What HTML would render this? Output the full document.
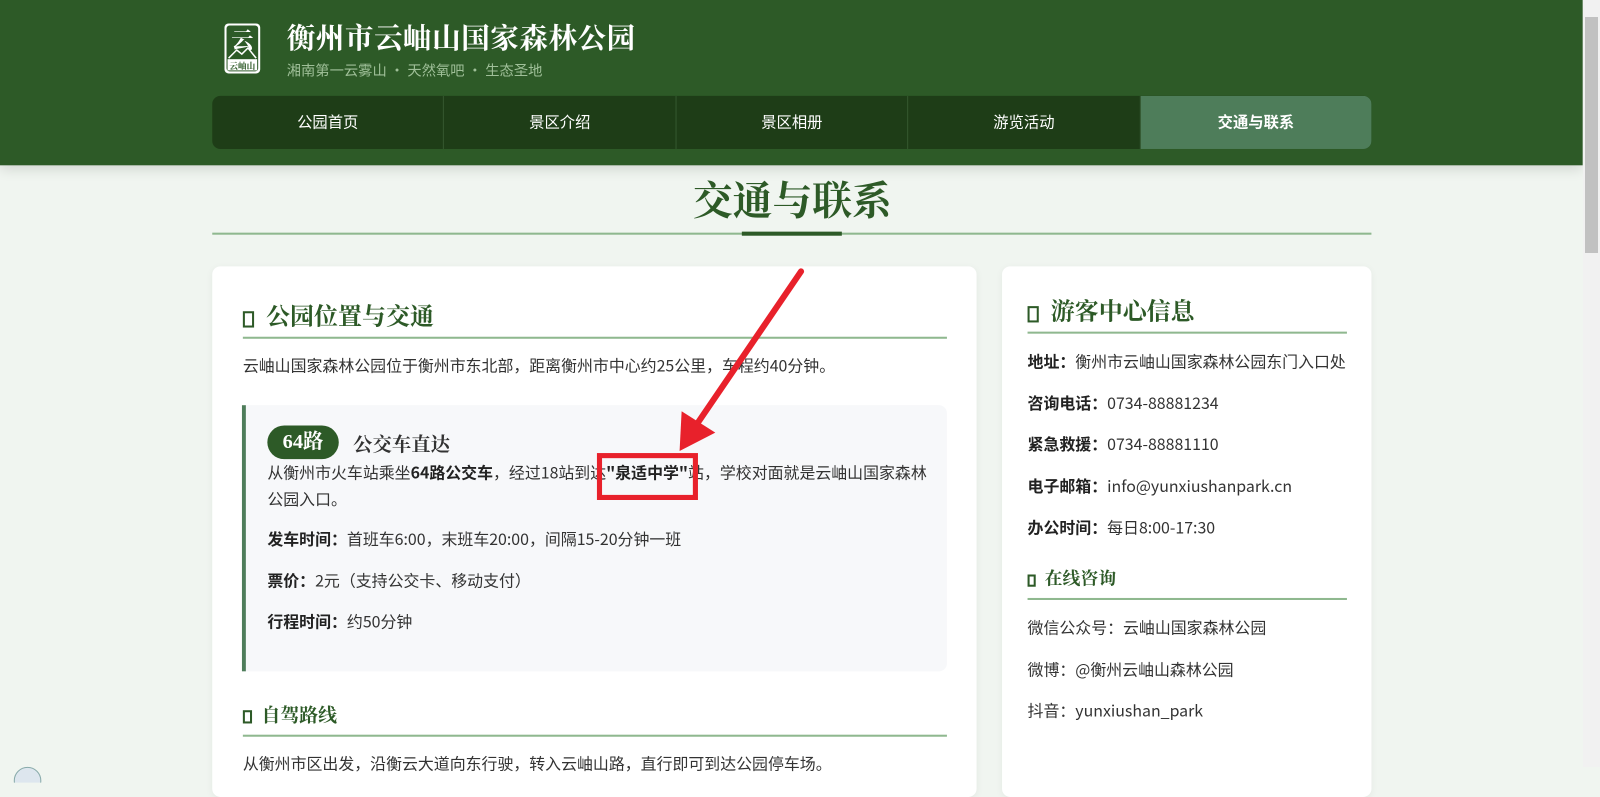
<!DOCTYPE html>
<html><head><meta charset="utf-8"><style>
*{margin:0;padding:0;box-sizing:border-box}
body{width:1600px;height:767px;overflow:hidden;background:#f0f5f0;font-family:"Noto Sans CJK SC","Liberation Sans",sans-serif;color:#333;position:relative}
#w{position:absolute;left:0;top:0;width:1551px;height:752px;transform:scale(1.02041);transform-origin:0 0}
.a{position:absolute;white-space:nowrap}
.serif{font-family:"Liberation Serif","Noto Serif CJK SC",serif;font-weight:bold}
header{position:absolute;left:0;top:0;width:1551px;height:162px;background:#2d5a27;box-shadow:0 4px 12px rgba(0,0,0,.12)}
.nav{position:absolute;left:208px;top:94px;width:1136px;height:52px;background:#1e3d17;border-radius:8px;display:flex;overflow:hidden}
.nav div{flex:1;color:#fff;font-size:15px;text-align:center;line-height:52px;border-right:1px solid #35582f}
.nav div:last-child{background:#4e7d5a;font-weight:bold;border:none}
.card{position:absolute;background:#fff;border-radius:8px;box-shadow:0 2px 8px rgba(0,0,0,.05)}
.h{color:#2d5a27}
.ic{display:inline-block;width:11px;height:16px;border:2px solid #2d5a27;vertical-align:middle}
.line{position:absolute;height:2px;background:#8fb88f}
.t{font-size:15.6px;color:#333}
b{color:#222}
</style></head><body>
<div id="w">
<header>
  <svg class="a" style="left:219px;top:22px" width="37" height="51" viewBox="0 0 37 51">
    <rect x="1" y="1" width="35" height="49" rx="4" fill="#fff"/>
    <rect x="3" y="3" width="31" height="45" rx="3" fill="#2d5a27"/>
    <text x="18.5" y="25" font-size="22" fill="#fff" text-anchor="middle" font-family="Noto Serif CJK SC,serif" font-weight="bold">云</text>
    <path d="M5 35 L13 27 L18 31 L24 25 L32 35" stroke="#fff" fill="none" stroke-width="1.5"/>
    <rect x="4" y="36" width="29" height="11" fill="#fff"/>
    <text x="18.5" y="45.5" font-size="8.5" fill="#2d5a27" text-anchor="middle" font-family="Noto Serif CJK SC,serif" font-weight="bold">云岫山</text>
  </svg>
  <div class="a serif" style="left:281px;top:16px;font-size:28px;color:#fff;letter-spacing:0.5px">衡州市云岫山国家森林公园</div>
  <div class="a" style="left:281px;top:59px;font-size:14px;color:#9fbf98">湘南第一云雾山 · 天然氧吧 · 生态圣地</div>
  <div class="nav"><div>公园首页</div><div>景区介绍</div><div>景区相册</div><div>游览活动</div><div>交通与联系</div></div>
</header>
<div class="a serif h" style="left:679px;top:166px;font-size:39px">交通与联系</div>
<div class="line" style="left:208px;top:228px;width:1136px"></div>
<div class="a" style="left:727px;top:227px;width:98px;height:4px;background:#2d5a27"></div>

<div class="card" style="left:208px;top:261px;width:749px;height:520px">
  <div class="a serif h" style="left:30px;top:30px;font-size:23.5px"><span class="ic"></span>&nbsp; 公园位置与交通</div>
  <div class="line" style="left:30px;top:69px;width:690px"></div>
  <div class="a t" style="left:30px;top:86px">云岫山国家森林公园位于衡州市东北部，距离衡州市中心约25公里，车程约40分钟。</div>
  <div class="a" style="left:29px;top:136px;width:691px;height:261px;background:#f7f8fa;border-left:4px solid #4e7d5a;border-radius:0 8px 8px 0">
    <div class="a serif" style="left:21px;top:20px;width:70px;height:33px;background:#2d5a27;color:#fff;border-radius:17px;text-align:center;line-height:33px;font-size:20px">64路</div>
    <div class="a serif" style="left:105px;top:24px;font-size:19px;color:#333">公交车直达</div>
    <div class="a t" style="left:21px;top:53px;line-height:26px;white-space:normal;width:655px">从衡州市火车站乘坐<b>64路公交车</b>，经过18站到达<b>"泉适中学"</b>站，学校对面就是云岫山国家森林公园入口。</div>
    <div class="a t" style="left:21px;top:120px"><b>发车时间：</b>首班车6:00，末班车20:00，间隔15-20分钟一班</div>
    <div class="a t" style="left:21px;top:161px"><b>票价：</b>2元（支持公交卡、移动支付）</div>
    <div class="a t" style="left:21px;top:201px"><b>行程时间：</b>约50分钟</div>
  </div>
  <div class="a serif h" style="left:30px;top:426px;font-size:18.5px"><span class="ic" style="width:9px;height:13px"></span>&nbsp; 自驾路线</div>
  <div class="line" style="left:30px;top:459px;width:690px"></div>
  <div class="a t" style="left:30px;top:476px">从衡州市区出发，沿衡云大道向东行驶，转入云岫山路，直行即可到达公园停车场。</div>
</div>

<div class="card" style="left:982px;top:261px;width:362px;height:520px">
  <div class="a serif h" style="left:25px;top:25px;font-size:23.5px"><span class="ic"></span>&nbsp; 游客中心信息</div>
  <div class="line" style="left:25px;top:64px;width:313px"></div>
  <div class="a t" style="left:25px;top:82px"><b>地址：</b>衡州市云岫山国家森林公园东门入口处</div>
  <div class="a t" style="left:25px;top:123px"><b>咨询电话：</b>0734-88881234</div>
  <div class="a t" style="left:25px;top:163px"><b>紧急救援：</b>0734-88881110</div>
  <div class="a t" style="left:25px;top:204px"><b>电子邮箱：</b>info@yunxiushanpark.cn</div>
  <div class="a t" style="left:25px;top:245px"><b>办公时间：</b>每日8:00-17:30</div>
  <div class="a serif h" style="left:25px;top:293px;font-size:17.5px"><span class="ic" style="width:8px;height:12px"></span>&nbsp; 在线咨询</div>
  <div class="line" style="left:25px;top:325px;width:313px"></div>
  <div class="a t" style="left:25px;top:343px">微信公众号：云岫山国家森林公园</div>
  <div class="a t" style="left:25px;top:384px">微博：@衡州云岫山森林公园</div>
  <div class="a t" style="left:25px;top:424px">抖音：yunxiushan_park</div>
</div>

<svg class="a" style="left:0;top:0" width="1551" height="767">
  <line x1="785" y1="266" x2="680" y2="420" stroke="#e8212b" stroke-width="6" stroke-linecap="round"/>
  <polygon points="666,442 668,403 701,424" fill="#e8212b"/>
  <rect x="587.5" y="446.5" width="94" height="41" fill="none" stroke="#e8212b" stroke-width="5"/>
  <circle cx="27" cy="765" r="13" fill="#dde6ee" stroke="#8aa" stroke-width="1"/>
</svg>
</div>
<div class="a" style="left:1583px;top:0;width:17px;height:767px;background:#f1f1f1"></div>
<div class="a" style="left:1585px;top:17px;width:13px;height:236px;background:#c1c1c1"></div>
</body></html>
